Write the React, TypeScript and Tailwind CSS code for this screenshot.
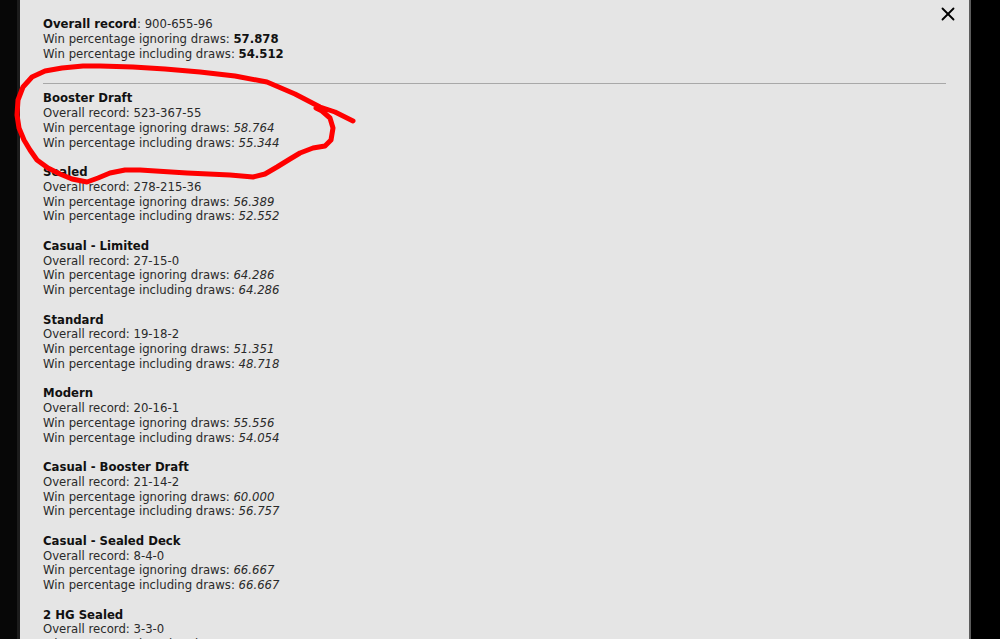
import { X } from 'lucide-react'

type Stat = { title: string; record: string; ignoring: string; including: string }

const sections: Stat[] = [
  { title: 'Booster Draft', record: '523-367-55', ignoring: '58.764', including: '55.344' },
  { title: 'Sealed', record: '278-215-36', ignoring: '56.389', including: '52.552' },
  { title: 'Casual - Limited', record: '27-15-0', ignoring: '64.286', including: '64.286' },
  { title: 'Standard', record: '19-18-2', ignoring: '51.351', including: '48.718' },
  { title: 'Modern', record: '20-16-1', ignoring: '55.556', including: '54.054' },
  { title: 'Casual - Booster Draft', record: '21-14-2', ignoring: '60.000', including: '56.757' },
  { title: 'Casual - Sealed Deck', record: '8-4-0', ignoring: '66.667', including: '66.667' },
  { title: '2 HG Sealed', record: '3-3-0', ignoring: '50.000', including: '50.000' },
]

// the hand-drawn red loop over the screenshot
const loop: [number, number][] = [
  [353, 121], [335, 112], [320, 107], [295, 94], [267, 82], [235, 76], [200, 72], [165, 69],
  [133, 67], [100, 66], [83, 66], [62, 68], [45, 71], [32, 77], [23, 87], [18, 100], [17, 115],
  [19, 128], [24, 140], [30, 150], [37, 160], [48, 168], [60, 174], [72, 179], [87, 182],
  [98, 178], [110, 173], [125, 170], [140, 170], [187, 173], [230, 175], [253, 177], [265, 174],
  [277, 167], [290, 159], [300, 153], [313, 148], [325, 146], [331, 140], [333, 128], [330, 118],
  [322, 111], [316, 108],
]

export default function App() {
  return (
    <div className="relative flex h-[639px] w-[1000px] overflow-hidden bg-black">
      <div className="w-[17px] bg-[#070707]" />
      <div className="w-[3px] bg-[#1c1c1c]" />

      {/* Panneau des statistiques */}
      <div
        className="relative w-[951px] border-r-2 border-[#5c5c5c] bg-[#e5e5e5] pl-[23px] pt-[17px] text-[11.7px] leading-[14.75px] text-[#2a2a2a]"
        style={{ fontFamily: '"DejaVu Sans", sans-serif' }}
      >
        <button className="absolute right-[10px] top-[3px] text-black">
          <X size={22} strokeWidth={2} />
        </button>

        <div>
          <div><b className="text-[#111]">Overall record</b>: 900-655-96</div>
          <div>Win percentage ignoring draws: <b className="text-[#111]">57.878</b></div>
          <div>Win percentage including draws: <b className="text-[#111]">54.512</b></div>
        </div>

        <hr className="mb-[7px] mr-[23px] mt-[22px] border-t border-[#a8a8a8]" />

        <div className="flex flex-col gap-[14.75px]">
          {sections.map(s => (
            <div key={s.title}>
              <div className="font-bold text-[#111]">{s.title}</div>
              <div>Overall record: {s.record}</div>
              <div>Win percentage ignoring draws: <i>{s.ignoring}</i></div>
              <div>Win percentage including draws: <i>{s.including}</i></div>
            </div>
          ))}
        </div>
      </div>

      <svg className="pointer-events-none absolute left-0 top-0" width="1000" height="639">
        <polyline
          points={loop.map(p => p.join(',')).join(' ')}
          fill="none"
          stroke="#ff0000"
          strokeWidth="5"
          strokeLinejoin="round"
          strokeLinecap="round"
        />
      </svg>
    </div>
  )
}
